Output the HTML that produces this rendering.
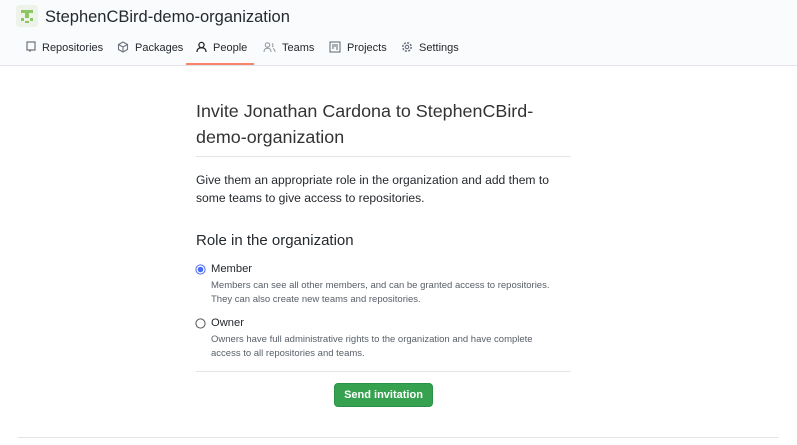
<!DOCTYPE html>
<html><head><style>
body{margin:0;width:797px;height:445px;background:#fff;font-family:"Liberation Sans",sans-serif;color:#24292e;position:relative;overflow:hidden}
.a{position:absolute;white-space:nowrap}
.hdr{position:absolute;left:0;top:0;width:797px;height:65px;background:#fafbfc;border-bottom:1px solid #e1e4e8}
.tab{position:absolute;top:41px;font-size:11px;color:#24292e}
.tab svg{vertical-align:-2px;margin-right:6px}
.hr{position:absolute;height:1px;background:#e1e4e8}
.desc{font-size:9.5px;color:#586069;line-height:13.5px}
</style></head><body>
<div class="hdr"></div>
<svg class="a" style="left:16px;top:5px" width="22" height="22"><rect width="22" height="22" rx="3" fill="#eef3ea"/><rect x="5" y="5" width="12" height="3" fill="#8cc665"/><rect x="9" y="8" width="4" height="5" fill="#8cc665"/><rect x="5" y="13" width="3" height="3" fill="#8cc665"/><rect x="14" y="13" width="3" height="3" fill="#8cc665"/><rect x="9" y="16" width="4" height="2" fill="#8cc665"/></svg>
<div class="a" style="left:45px;top:8px;font-size:16.5px">StephenCBird-demo-organization</div>
<div class="tab a" style="left:26px"><svg width="10" height="12" viewBox="0 0 10 12"><rect x="1" y="1" width="8" height="8" fill="none" stroke="#6a737d" stroke-width="1.2"/><path d="M3 9v2l1-1 1 1V9" fill="#6a737d"/></svg>Repositories</div>
<div class="tab a" style="left:117px"><svg width="12" height="12" viewBox="0 0 12 12"><path d="M6 1l4.5 2.5v5L6 11 1.5 8.5v-5z M1.5 3.5L6 6l4.5-2.5M6 6v5" fill="none" stroke="#6a737d" stroke-width="1.1"/></svg>Packages</div>
<div class="tab a" style="left:196px"><svg width="11" height="12" viewBox="0 0 11 12"><circle cx="5.5" cy="4" r="2.6" fill="none" stroke="#24292e" stroke-width="1.3"/><path d="M1 11c0-3 2-4.3 4.5-4.3S10 8 10 11" fill="none" stroke="#24292e" stroke-width="1.3"/></svg>People</div>
<div class="tab a" style="left:263px"><svg width="13" height="12" viewBox="0 0 13 12"><circle cx="4.5" cy="4" r="2.2" fill="none" stroke="#959da5" stroke-width="1.1"/><path d="M1 11c0-2.5 1.5-3.8 3.5-3.8S8 8.5 8 11M9 2.5a2 2 0 010 3.5M10 7.5c1.2.5 2 1.6 2 3.5" fill="none" stroke="#959da5" stroke-width="1.1"/></svg>Teams</div>
<div class="tab a" style="left:329px"><svg width="12" height="12" viewBox="0 0 12 12"><rect x="1" y="1" width="10" height="10" fill="none" stroke="#6a737d" stroke-width="1.1"/><path d="M4 3v5M6 3v3M8 3v6" stroke="#6a737d" stroke-width="1.1"/></svg>Projects</div>
<div class="tab a" style="left:401px"><svg width="12" height="12" viewBox="0 0 12 12"><circle cx="6" cy="6" r="4.2" fill="none" stroke="#6a737d" stroke-width="1.6" stroke-dasharray="2 1.3"/><circle cx="6" cy="6" r="1.7" fill="none" stroke="#6a737d" stroke-width="1.1"/></svg>Settings</div>
<div class="a" style="left:186px;top:63px;width:68px;height:2px;background:#f9826c"></div>

<div class="a" style="left:196px;top:98px;font-size:17.9px;line-height:26px;color:#333">Invite Jonathan Cardona to StephenCBird-<br>demo-organization</div>
<div class="hr" style="left:196px;top:156px;width:375px"></div>
<div class="a" style="left:196px;top:171px;font-size:12.1px;line-height:18px">Give them an appropriate role in the organization and add them to<br>some teams to give access to repositories.</div>
<div class="a" style="left:196px;top:232px;font-size:15px;font-weight:500">Role in the organization</div>

<svg class="a" style="left:195px;top:264px" width="11" height="11"><circle cx="5.5" cy="5.5" r="4.6" fill="#fff" stroke="#4a6cf7" stroke-width="1"/><circle cx="5.5" cy="5.5" r="2.8" fill="#4a6cf7"/></svg>
<div class="a" style="left:211px;top:263px;font-size:11.2px">Member</div>
<div class="a desc" style="left:211px;top:279px">Members can see all other members, and can be granted access to repositories.<br>They can also create new teams and repositories.</div>
<svg class="a" style="left:195px;top:318px" width="11" height="11"><circle cx="5.5" cy="5.5" r="4.6" fill="#fff" stroke="#555" stroke-width="1"/></svg>
<div class="a" style="left:211px;top:317px;font-size:11.2px">Owner</div>
<div class="a desc" style="left:211px;top:333px">Owners have full administrative rights to the organization and have complete<br>access to all repositories and teams.</div>
<div class="hr" style="left:196px;top:371px;width:375px"></div>
<div class="a" style="left:334px;top:383px;width:97px;height:22px;background:#36a24f;border:1px solid #2a9147;border-radius:4px;color:#fff;font-size:11px;font-weight:bold;text-align:center;line-height:22px">Send invitation</div>
<div class="hr" style="left:18px;top:437px;width:761px"></div>
</body></html>
